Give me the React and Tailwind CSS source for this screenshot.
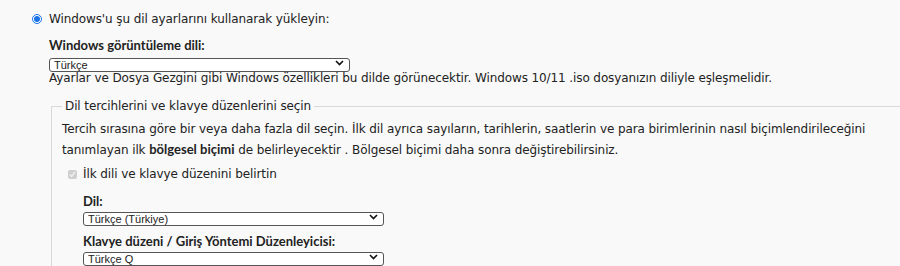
import React from 'react';

const Chevron = () => (
    <svg width="9" height="6" viewBox="0 0 9 6" className="absolute right-[6px] top-[4px] pointer-events-none">
        <polyline points="1,1 4.5,4.5 8,1" fill="none" stroke="#111" strokeWidth="1.6" />
    </svg>
);

const Dropdown = ({ value, className }) => (
    <div className={`relative w-[301px] h-[14px] ${className || ''}`}>
        <select
            defaultValue={value}
            className="appearance-none w-full h-full bg-white border border-[#555] rounded-[3px] pl-[4px] text-[11px] leading-[12px] tracking-normal text-[#222] font-['Liberation_Sans',Arial,sans-serif] outline-none"
        >
            <option>{value}</option>
        </select>
        <Chevron />
    </div>
);

const Heading = ({ children, className }) => (
    <div className={`font-bold text-[13px] tracking-normal leading-[18px] font-['Lato',sans-serif] ${className || ''}`}>
        {children}
    </div>
);

export default function App() {
    return (
        <div className="w-[900px] h-[266px] overflow-hidden bg-[#f9f9f9] text-[#222] text-[12px] tracking-[-0.1px] font-['DejaVu_Sans',Verdana,sans-serif]">
            {/* install option */}
            <div className="flex items-center pt-[9px] pl-[32px] leading-[20px]">
                <input type="radio" defaultChecked className="w-[10px] h-[10px] m-0 accent-[#1a73e8]" />
                <span className="ml-[7px]">Windows'u şu dil ayarlarını kullanarak yükleyin:</span>
            </div>

            <div className="pl-[49px]">
                <Heading className="mt-[7px]">Windows görüntüleme dili:</Heading>
                <Dropdown value="Türkçe" className="mt-[2px]" />
                <div className="leading-[16px]">
                    Ayarlar ve Dosya Gezgini gibi Windows özellikleri bu dilde görünecektir. Windows 10/11 .iso dosyanızın diliyle eşleşmelidir.
                </div>
            </div>

            <fieldset className="ml-[51px] mt-[10px] w-[880px] border border-[#d9d9d9] pl-[10px] pb-[20px]">
                <legend className="px-[3px] leading-[20px]">Dil tercihlerini ve klavye düzenlerini seçin</legend>
                <p className="mt-[3px] leading-[20px]">
                    Tercih sırasına göre bir veya daha fazla dil seçin. İlk dil ayrıca sayıların, tarihlerin, saatlerin ve para birimlerinin nasıl biçimlendirileceğini
                    <br />
                    tanımlayan ilk <b className="text-[13px] tracking-normal font-['Lato',sans-serif]">bölgesel biçimi</b> de belirleyecektir . Bölgesel biçimi daha sonra değiştirebilirsiniz.
                </p>
                <label className="flex items-center mt-[4px] leading-[20px]">
                    <input type="checkbox" defaultChecked disabled className="w-[9px] h-[9px] m-0 ml-[6px]" />
                    <span className="ml-[6px]">İlk dili ve klavye düzenini belirtin</span>
                </label>
                <div className="pl-[21px]">
                    <Heading className="mt-[8px]">Dil:</Heading>
                    <Dropdown value="Türkçe (Türkiye)" />
                    <Heading className="mt-[8px]">Klavye düzeni / Giriş Yöntemi Düzenleyicisi:</Heading>
                    <Dropdown value="Türkçe Q" />
                </div>
            </fieldset>
        </div>
    );
}
